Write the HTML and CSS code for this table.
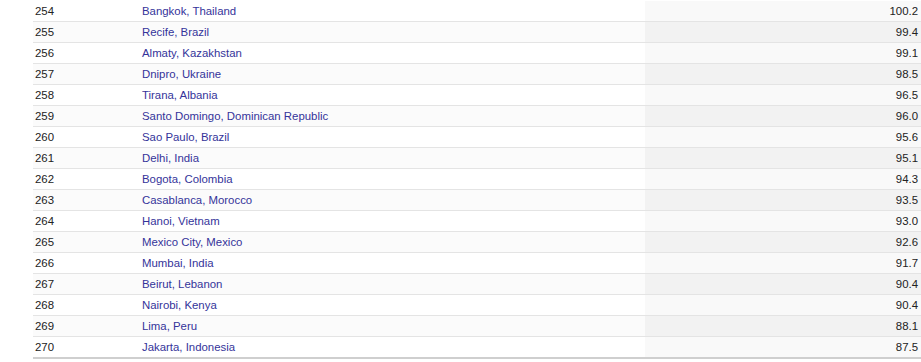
FILE: index.html
```html
<!DOCTYPE html>
<html>
<head>
<meta charset="utf-8">
<link rel="stylesheet" href="styles.css">
</head>
<body>
<div class="wrap">
<table class="rank">
<colgroup><col class="c-rank"><col class="c-city"><col class="c-val"></colgroup>
<tbody>
<tr><td>254</td><td><a href="#">Bangkok, Thailand</a></td><td class="val">100.2</td></tr>
<tr><td>255</td><td><a href="#">Recife, Brazil</a></td><td class="val">99.4</td></tr>
<tr><td>256</td><td><a href="#">Almaty, Kazakhstan</a></td><td class="val">99.1</td></tr>
<tr><td>257</td><td><a href="#">Dnipro, Ukraine</a></td><td class="val">98.5</td></tr>
<tr><td>258</td><td><a href="#">Tirana, Albania</a></td><td class="val">96.5</td></tr>
<tr><td>259</td><td><a href="#">Santo Domingo, Dominican Republic</a></td><td class="val">96.0</td></tr>
<tr><td>260</td><td><a href="#">Sao Paulo, Brazil</a></td><td class="val">95.6</td></tr>
<tr><td>261</td><td><a href="#">Delhi, India</a></td><td class="val">95.1</td></tr>
<tr><td>262</td><td><a href="#">Bogota, Colombia</a></td><td class="val">94.3</td></tr>
<tr><td>263</td><td><a href="#">Casablanca, Morocco</a></td><td class="val">93.5</td></tr>
<tr><td>264</td><td><a href="#">Hanoi, Vietnam</a></td><td class="val">93.0</td></tr>
<tr><td>265</td><td><a href="#">Mexico City, Mexico</a></td><td class="val">92.6</td></tr>
<tr><td>266</td><td><a href="#">Mumbai, India</a></td><td class="val">91.7</td></tr>
<tr><td>267</td><td><a href="#">Beirut, Lebanon</a></td><td class="val">90.4</td></tr>
<tr><td>268</td><td><a href="#">Nairobi, Kenya</a></td><td class="val">90.4</td></tr>
<tr><td>269</td><td><a href="#">Lima, Peru</a></td><td class="val">88.1</td></tr>
<tr><td>270</td><td><a href="#">Jakarta, Indonesia</a></td><td class="val">87.5</td></tr>
</tbody>
</table>
</div>
</body>
</html>
```
FILE: styles.css
```css
html, body {
  margin: 0;
  padding: 0;
  background: #ffffff;
}
.wrap {
  padding: 1px 0 0 33px;
}
.rank {
  width: 888px;
  border-collapse: collapse;
  font-family: "Liberation Sans", Arial, sans-serif;
  font-size: 11.4px;
  color: #222222;
  border-bottom: 2px solid #cfcfcf;
}
.c-rank { width: 107px; }
.c-city { width: 505px; }
.c-val { width: 276px; }
.rank td {
  height: 20px;
  padding: 0 3px 0 2px;
  border-bottom: 1px solid #e4e4e4;
  line-height: 20px;
  white-space: nowrap;
}
.rank tr:nth-child(even) td {
  background: #fbfbfb;
}
.rank td.val {
  text-align: right;
  background: #f9f9f9;
}
.rank tr:nth-child(even) td.val {
  background: #f2f2f2;
}
.rank a {
  color: #34339a;
  text-decoration: none;
}
```
